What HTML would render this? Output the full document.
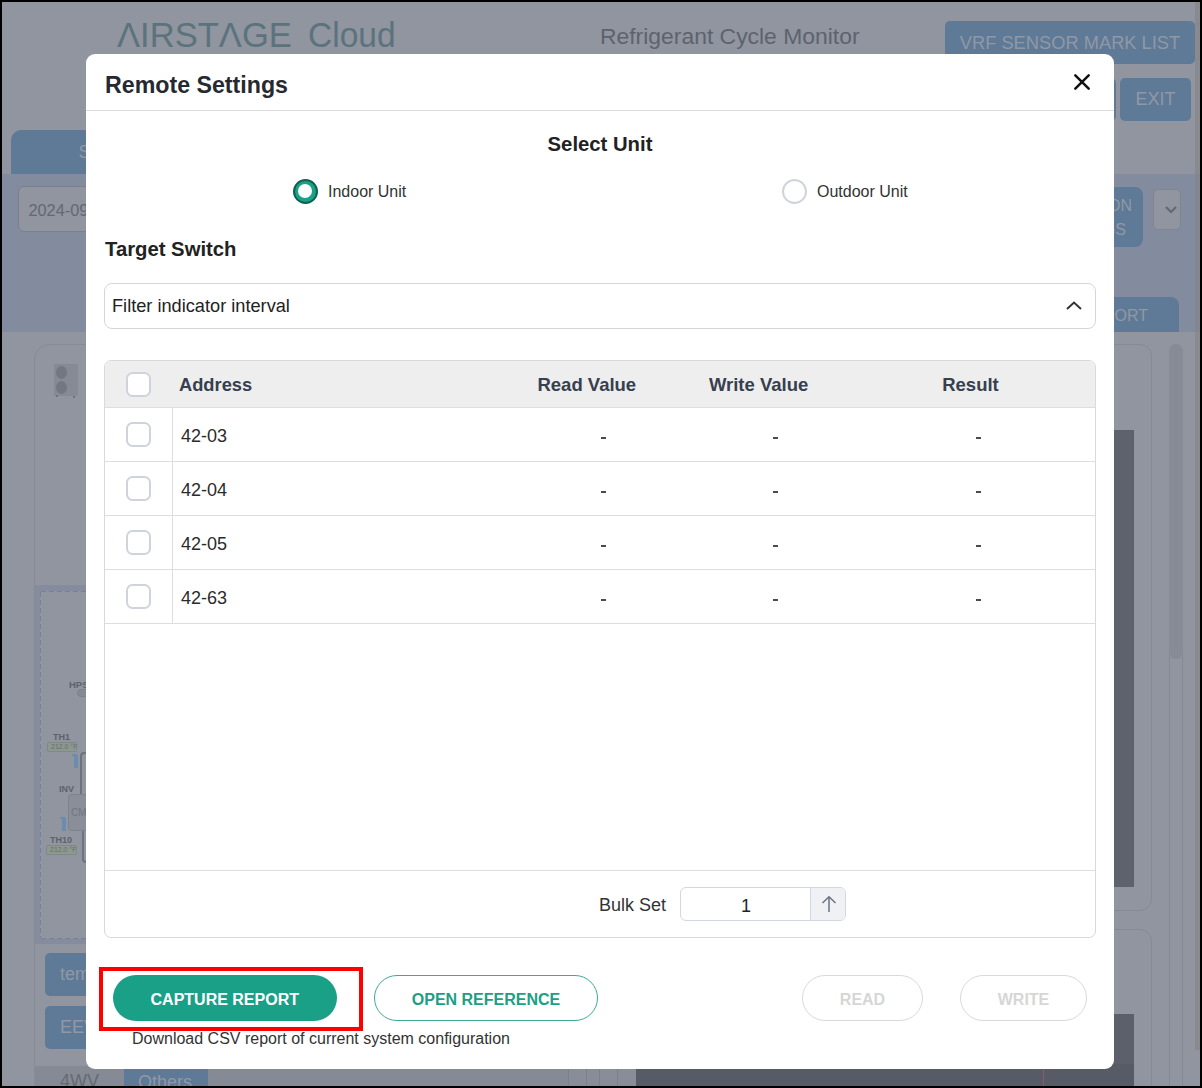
<!DOCTYPE html>
<html><head><meta charset="utf-8">
<style>
*{box-sizing:border-box;margin:0;padding:0}
html,body{width:1202px;height:1088px;overflow:hidden}
body{background:#000;font-family:"Liberation Sans",sans-serif;position:relative}
.a{position:absolute}
.page{position:absolute;left:2px;top:2px;width:1198px;height:1084px;background:#91959f;overflow:hidden}
.bb{background:#5f7a96;border-radius:5px;color:#9098a6;white-space:nowrap}
.modal{position:absolute;left:86px;top:54px;width:1028px;height:1014.6px;background:#fff;border-radius:9px;color:#333}
.t{white-space:nowrap;line-height:1}
.cb{position:absolute;width:24.8px;height:24.8px;border:2px solid #cfd4dc;border-radius:6.5px;background:#fff}
.rowline{position:absolute;left:0;width:990px;height:1px;background:#dedede}
.dash{position:absolute;width:5px;height:1.5px;background:#474c52}
.btn{position:absolute;height:46px;border-radius:23px;text-align:center;font-weight:bold;font-size:16px;line-height:50px;white-space:nowrap}
</style></head>
<body>
<div class="page">
  <!-- coordinates inside .page are offset by -2 -->
  <div class="a t" style="left:115px;top:16px;font-size:35.5px;color:#5b737d;transform:scaleX(0.974);transform-origin:0 0">ΛIRSTΛGE</div>
  <div class="a t" style="left:306px;top:16px;font-size:35.5px;color:#5b737d;transform:scaleX(0.944);transform-origin:0 0">Cloud</div>
  <div class="a t" style="left:598px;top:23px;font-size:22.9px;color:#5d636e">Refrigerant Cycle Monitor</div>
  <div class="a bb" style="left:943px;top:18.5px;width:250px;height:43.2px;font-size:18.3px;line-height:44px;text-align:center">VRF SENSOR MARK LIST</div>
  <div class="a bb" style="left:1060px;top:76px;width:54px;height:43px"></div>
  <div class="a bb" style="left:1118px;top:76px;width:71px;height:43px;font-size:18px;line-height:43px;text-align:center">EXIT</div>
  <!-- tab -->
  <div class="a" style="left:9px;top:128px;width:200px;height:44px;background:#5f7a96;border-radius:10px 10px 0 0;color:#9098a6;font-size:18px;line-height:44px;padding-left:67.5px">S</div>
  <div class="a" style="left:0;top:172px;width:1198px;height:158px;background:#838c9e"></div>
  <div class="a" style="left:16px;top:184px;width:140px;height:46px;border:1px solid #7b808d;border-radius:6px;background:#91959f;color:#626874;font-size:16.3px;line-height:47px;padding-left:9.5px">2024-09-01</div>
  <div class="a bb" style="left:1040px;top:185px;width:101px;height:60px;border-radius:8px"></div>
  <div class="a t" style="left:1000px;top:196px;width:130px;text-align:right;font-size:16px;color:#9098a6">ATION</div>
  <div class="a t" style="left:1000px;top:220px;width:124px;text-align:right;font-size:16px;color:#9098a6">INGS</div>
  <div class="a" style="left:1151px;top:187px;width:28px;height:41px;border:1px solid #80858f;border-radius:5px;background:#91959f"></div>
  <svg class="a" style="left:1162px;top:203px" width="14" height="10" viewBox="0 0 14 10"><path d="M2 2 L7 7 L12 2" stroke="#636873" stroke-width="2.2" fill="none"/></svg>
  <div class="a bb" style="left:1040px;top:295px;width:137px;height:35px;border-radius:8px 8px 0 0"></div>
  <div class="a t" style="left:1000px;top:306px;width:146px;text-align:right;font-size:16px;color:#9098a6">REPORT</div>
  <!-- left panel -->
  <div class="a" style="left:32px;top:342px;width:540px;height:800px;border:1px solid #878b95;border-radius:16px"></div>
  <div class="a" style="left:33px;top:583px;width:538px;height:359px;background:#868c9e"></div>
  <div class="a" style="left:38px;top:589px;width:520px;height:348px;background:#91959f;border-radius:2px"></div>
  <div class="a" style="left:39px;top:589px;width:518px;height:1px;background:repeating-linear-gradient(90deg,#76829b 0 5px,transparent 5px 8px)"></div>
  <div class="a" style="left:39px;top:936px;width:518px;height:1px;background:repeating-linear-gradient(90deg,#76829b 0 5px,transparent 5px 8px)"></div>
  <div class="a" style="left:38px;top:590px;width:1px;height:346px;background:repeating-linear-gradient(180deg,#76829b 0 5px,transparent 5px 8px)"></div>
  <!-- diagram bits (page coords = screen-2) -->
  <div class="a t" style="left:67px;top:678px;font-size:9.5px;font-weight:bold;color:#5d626c">HPS</div>
  <div class="a" style="left:75px;top:687px;width:20px;height:8px;border:1px solid #7d818b;border-radius:4px;background:#868a94"></div>
  <div class="a t" style="left:51px;top:731px;font-size:9px;font-weight:bold;color:#5d626c">TH1</div>
  <div class="a" style="left:45px;top:740px;width:30px;height:10px;border:1px solid #7f8a86;border-radius:2px;background:#8d9893;font-size:7px;line-height:8px;color:#6b6f60;padding-left:3px;white-space:nowrap">212.0 °F</div>
  <div class="a" style="left:70px;top:752px;width:5px;height:2px;background:#6b8cb0"></div>
  <div class="a" style="left:72px;top:753px;width:4px;height:13px;background:#6b8cb0"></div>
  <div class="a" style="left:78px;top:750px;width:8px;height:43px;border:2px solid #6f737d;border-right:none;border-bottom:none;border-radius:4px 0 0 0"></div>
  <div class="a t" style="left:57px;top:783px;font-size:9px;font-weight:bold;color:#5d626c">INV</div>
  <div class="a" style="left:66px;top:792px;width:30px;height:37px;border:1px solid #7f838d;border-radius:3px;background:#8a8e98;font-size:10px;line-height:35px;color:#6f747e;padding-left:2px">CM</div>
  <div class="a" style="left:58px;top:815px;width:5px;height:2px;background:#6b8cb0"></div>
  <div class="a" style="left:60px;top:816px;width:4px;height:13px;background:#6b8cb0"></div>
  <div class="a" style="left:80px;top:829px;width:8px;height:32px;border:2px solid #6f737d;border-right:none;border-top:none;border-radius:0 0 0 4px"></div>
  <div class="a t" style="left:48px;top:834px;font-size:9px;font-weight:bold;color:#5d626c">TH10</div>
  <div class="a" style="left:44px;top:843px;width:31px;height:10px;border:1px solid #7f8a86;border-radius:2px;background:#8d9893;font-size:7px;line-height:8px;color:#6b6f60;padding-left:3px;white-space:nowrap">212.0 °F</div>
  <!-- outdoor unit icon -->
  <div class="a" style="left:52px;top:362px;width:24px;height:32px;background:#868a94;border-radius:1px"></div>
  <div class="a" style="left:54px;top:393px;width:2px;height:2px;background:#6f737d"></div>
  <div class="a" style="left:71px;top:394px;width:2px;height:2px;background:#6f737d"></div>
  <div class="a" style="left:54px;top:364px;width:11px;height:13px;border-radius:50%;background:#737781"></div>
  <div class="a" style="left:54px;top:379px;width:11px;height:13px;border-radius:50%;background:#737781"></div>
  <!-- right panel -->
  <div class="a" style="left:580px;top:342px;width:570px;height:567px;border:1px solid #868a95;border-radius:12px"></div>
  <div class="a" style="left:580px;top:927px;width:570px;height:300px;border:1px solid #868a95;border-radius:12px"></div>
  <div class="a" style="left:634px;top:428px;width:498px;height:457px;background:#5d626d"></div>
  <div class="a" style="left:633.5px;top:1012px;width:498.5px;height:100px;background:#5b606b"></div>
  <div class="a" style="left:633.5px;top:1062px;width:498.5px;height:30px;background:#565b66"></div>
  <div class="a" style="left:1041px;top:1064px;width:1px;height:30px;background:#8c5a68"></div>
  <div class="a" style="left:1167px;top:640px;width:1px;height:450px;background:#868a95"></div>
  <div class="a" style="left:1180px;top:640px;width:1px;height:450px;background:#868a95"></div>
  <div class="a" style="left:1166.5px;top:342px;width:14px;height:315px;border-radius:7px;background:#878b95"></div>
  <div class="a" style="left:1193px;top:0;width:5px;height:1048px;background:rgba(127,127,127,0.5)"></div>
  <!-- bottom-left buttons -->
  <div class="a bb" style="left:43px;top:951px;width:120px;height:43px;font-size:18px;line-height:43px;padding-left:15px">temp</div>
  <div class="a bb" style="left:43px;top:1004px;width:120px;height:43px;font-size:18px;line-height:43px;padding-left:15px">EEV</div>
  <div class="a" style="left:33px;top:1064px;width:534px;height:30px;background:#858a94"></div>
  <div class="a" style="left:566px;top:1064px;width:68px;height:30px;background:#898d97"></div>
  <div class="a" style="left:566px;top:1040px;width:1px;height:60px;background:#7c808a"></div>
  <div class="a" style="left:584px;top:1040px;width:1px;height:60px;background:#7c808a"></div>
  <div class="a" style="left:597px;top:1040px;width:1px;height:60px;background:#7c808a"></div>
  <div class="a" style="left:615px;top:1040px;width:1px;height:60px;background:#7c808a"></div>
  
  <div class="a t" style="left:58px;top:1070px;font-size:18px;color:#646a75">4WV</div>
  <div class="a bb" style="left:122px;top:1066px;width:84px;height:30px;border-radius:0;font-size:18px;line-height:28px;padding-left:14px">Others</div>
</div>

<div class="modal">
  <!-- modal coords: x-86, y-54 -->
  <div class="a t" style="left:19px;top:19.5px;font-size:23.2px;font-weight:bold;color:#262a30">Remote Settings</div>
  <svg class="a" style="left:986px;top:18px" width="20" height="20" viewBox="0 0 20 20"><path d="M3.3 3.3 L16.7 16.7 M16.7 3.3 L3.3 16.7" stroke="#111" stroke-width="2.5" stroke-linecap="round" fill="none"/></svg>
  <div class="a" style="left:0;top:56px;width:1028px;height:1px;background:#dcdcdc"></div>
  <div class="a t" style="left:0;top:80px;width:1028px;text-align:center;font-size:20.3px;font-weight:bold;color:#222">Select Unit</div>
  <!-- radios -->
  <div class="a" style="left:206.5px;top:124.5px;width:25.5px;height:25.5px;border-radius:50%;background:#1ba187;border:2.2px solid #0f6152"></div>
  <div class="a" style="left:212.3px;top:130.3px;width:14px;height:14px;border-radius:50%;background:#fff"></div>
  <div class="a t" style="left:242px;top:129.5px;font-size:16px;color:#333">Indoor Unit</div>
  <div class="a" style="left:696px;top:124.5px;width:25px;height:25px;border-radius:50%;background:#fff;border:2px solid #cfd4dc"></div>
  <div class="a t" style="left:731px;top:129.5px;font-size:16px;color:#333">Outdoor Unit</div>
  <div class="a t" style="left:19px;top:185px;font-size:20.3px;font-weight:bold;color:#222">Target Switch</div>
  <!-- dropdown -->
  <div class="a" style="left:18px;top:229px;width:992px;height:46px;border:1px solid #d6d6d6;border-radius:8px"></div>
  <div class="a t" style="left:26px;top:243px;font-size:18.2px;color:#222">Filter indicator interval</div>
  <svg class="a" style="left:978px;top:245px" width="20" height="14" viewBox="0 0 20 14"><path d="M3 10 L10 3.5 L17 10" stroke="#333" stroke-width="2" fill="none"/></svg>
  <!-- table -->
  <div class="a" style="left:18px;top:306px;width:992px;height:578px;border:1px solid #d9d9d9;border-radius:7px;overflow:hidden">
    <div class="a" style="left:0;top:0;width:990px;height:46px;background:#eeeeee"></div>
    <div class="rowline" style="top:46px"></div>
    <div class="rowline" style="top:100px"></div>
    <div class="rowline" style="top:154px"></div>
    <div class="rowline" style="top:208px"></div>
    <div class="rowline" style="top:262px"></div>
    <div class="rowline" style="top:509px"></div>
    <div class="a" style="left:67px;top:47px;width:1px;height:216px;background:#dedede"></div>
    <div class="cb" style="left:21px;top:11px"></div>
    <div class="cb" style="left:21px;top:61px"></div>
    <div class="cb" style="left:21px;top:115px"></div>
    <div class="cb" style="left:21px;top:169px"></div>
    <div class="cb" style="left:21px;top:223px"></div>
    <div class="a t" style="left:74px;top:14.5px;font-size:18.3px;font-weight:bold;color:#36404e">Address</div>
    <div class="a t" style="left:381.8px;top:14.5px;width:200px;text-align:center;font-size:18.5px;font-weight:bold;color:#36404e">Read Value</div>
    <div class="a t" style="left:553.6px;top:14.5px;width:200px;text-align:center;font-size:18.5px;font-weight:bold;color:#36404e">Write Value</div>
    <div class="a t" style="left:765.5px;top:14.5px;width:200px;text-align:center;font-size:18.5px;font-weight:bold;color:#36404e">Result</div>
    <div class="a t" style="left:76px;top:66px;font-size:18px;color:#2b2b2b">42-03</div>
    <div class="a t" style="left:76px;top:120px;font-size:18px;color:#2b2b2b">42-04</div>
    <div class="a t" style="left:76px;top:174px;font-size:18px;color:#2b2b2b">42-05</div>
    <div class="a t" style="left:76px;top:228px;font-size:18px;color:#2b2b2b">42-63</div>
    <div class="dash" style="left:495.7px;top:76.0px"></div>
    <div class="dash" style="left:668.3px;top:76.0px"></div>
    <div class="dash" style="left:871.0px;top:76.0px"></div>
    <div class="dash" style="left:495.7px;top:130.0px"></div>
    <div class="dash" style="left:668.3px;top:130.0px"></div>
    <div class="dash" style="left:871.0px;top:130.0px"></div>
    <div class="dash" style="left:495.7px;top:184.0px"></div>
    <div class="dash" style="left:668.3px;top:184.0px"></div>
    <div class="dash" style="left:871.0px;top:184.0px"></div>
    <div class="dash" style="left:495.7px;top:238.0px"></div>
    <div class="dash" style="left:668.3px;top:238.0px"></div>
    <div class="dash" style="left:871.0px;top:238.0px"></div>
    
    <div class="a t" style="left:494px;top:535px;font-size:18px;color:#333">Bulk Set</div>
    <div class="a" style="left:575px;top:526px;width:166px;height:34px;border:1px solid #d3d7de;border-radius:6px;overflow:hidden">
      <div class="a" style="left:129px;top:0;width:37px;height:32px;background:#f0f1f4;border-left:1px solid #d3d7de"></div>
      <div class="a t" style="left:0;top:9px;width:130px;text-align:center;font-size:18px;color:#222">1</div>
      <svg class="a" style="left:138px;top:7px" width="20" height="20" viewBox="0 0 20 20"><path d="M10 17 V1.8 M3.5 8 L10 1.8 L16.5 8" stroke="#6b7384" stroke-width="1.5" fill="none"/></svg>
    </div>
  </div>
  <!-- buttons -->
  <div class="a" style="left:13px;top:913px;width:264px;height:64px;border:4px solid #ff0000"></div>
  <div class="btn" style="left:26.5px;top:921px;width:224.5px;background:#1aa087;color:#fff">CAPTURE REPORT</div>
  <div class="btn" style="left:288px;top:921px;width:224px;border:1.6px solid #3aab95;color:#1e9e85;line-height:47px">OPEN REFERENCE</div>
  <div class="btn" style="left:716px;top:921px;width:121px;border:1.5px solid #d9d9d9;color:#d6d6d6;line-height:47px">READ</div>
  <div class="btn" style="left:874px;top:921px;width:127px;border:1.5px solid #d9d9d9;color:#d6d6d6;line-height:47px">WRITE</div>
  <div class="a t" style="left:46px;top:977px;font-size:16px;color:#333">Download CSV report of current system configuration</div>
</div>
</body></html>
